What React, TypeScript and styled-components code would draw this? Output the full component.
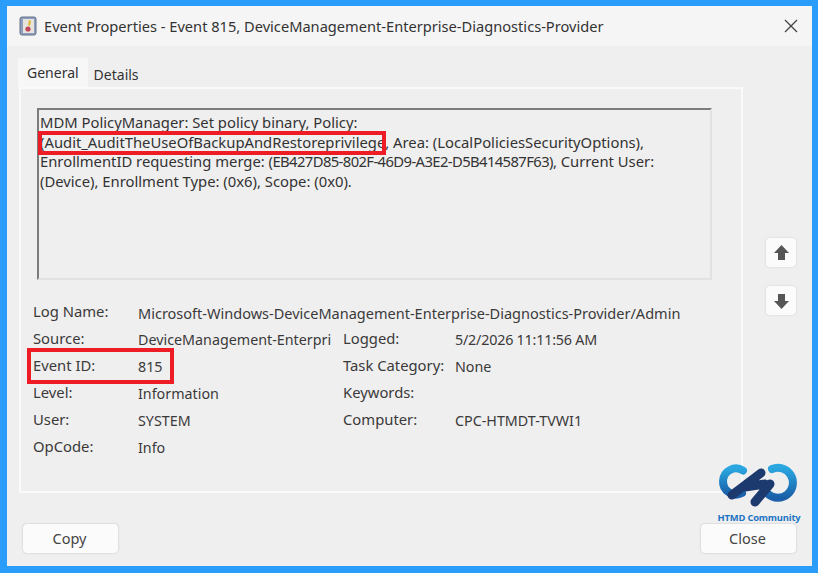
import React from 'react';
import styled, { createGlobalStyle } from 'styled-components';

const GlobalStyle = createGlobalStyle`
  html, body {
    margin: 0;
    padding: 0;
    background: #2a9dfb;
  }
  body {
    font-family: "Noto Sans", "Open Sans", sans-serif;
  }
`;

const Page = styled.div`
  width: 818px;
  height: 573px;
  padding: 6px 6px 7px 7px;
  box-sizing: border-box;
  overflow: hidden;
`;

const Window = styled.div`
  position: relative;
  height: 100%;
  background: #f0efef;
  display: flex;
  flex-direction: column;
`;

const TitleBar = styled.div`
  height: 40px;
  flex: none;
  display: flex;
  align-items: center;
  padding: 0 12px;
  background: #f5f5f5;
  color: #333;
  font-size: 14.63px;
`;

const TitleIcon = styled.svg`
  width: 18px;
  height: 20px;
  margin-right: 7px;
  flex: none;
`;

const TitleText = styled.span`
  flex: 1;
  white-space: nowrap;
`;

const CloseX = styled.svg`
  width: 14px;
  height: 14px;
  margin-right: 2px;
  flex: none;
`;

const Tabs = styled.div`
  display: flex;
  align-items: flex-end;
  height: 41px;
  padding-left: 11px;
  flex: none;
`;

const Tab = styled.div<{ $active?: boolean }>`
  height: ${p => (p.$active ? '29px' : '26px')};
  padding: ${p => (p.$active ? '5px 9px 0' : '4px 5px 0 6px')};
  box-sizing: border-box;
  font-size: 14px;
  color: #333;
  background: ${p => (p.$active ? '#f7f7f7' : 'transparent')};
`;

const Body = styled.div`
  display: flex;
  align-items: flex-start;
  padding-left: 12px;
`;

const Panel = styled.div`
  width: 724px;
  height: 406px;
  box-sizing: border-box;
  border: 2px solid #fafafa;
  padding: 19px 0 0 16px;
  flex: none;
`;

const MessageBox = styled.div`
  width: 675px;
  height: 172px;
  box-sizing: border-box;
  border-style: solid;
  border-width: 2px;
  border-color: #7c7c7c #e2e2e2 #e2e2e2 #7c7c7c;
  padding: 3px 1px;
  font-size: 14.8px;
  line-height: 19.5px;
  color: #333;
  white-space: nowrap;
`;

const Guid = styled.span`
  letter-spacing: -0.6px;
`;

const Fields = styled.div`
  display: grid;
  grid-template-columns: 105px 205px 112px 1fr;
  grid-auto-rows: 27px;
  align-items: center;
  margin: 17px 0 0 -4px;
  color: #3a3a3a;
`;

const Label = styled.span`
  font-size: 14.8px;
  white-space: nowrap;
`;

const Value = styled.span<{ $wide?: boolean; $tight?: boolean }>`
  font-size: ${p => (p.$wide ? '14.53px' : '14.3px')};
  letter-spacing: ${p => (p.$tight ? '-0.2px' : '0')};
  padding-top: 4px;
  white-space: nowrap;
  ${p => (p.$wide ? 'grid-column: 2 / 5;' : '')}
`;

const Side = styled.div`
  display: flex;
  flex-direction: column;
  gap: 19px;
  margin: 151px 0 0 23px;
`;

const ArrowButton = styled.div`
  width: 30px;
  height: 29px;
  background: #fbfbfb;
  border-radius: 4px;
  box-shadow: 0 0 2px #c8c8c8;
  display: flex;
  align-items: center;
  justify-content: center;
`;

const Footer = styled.div`
  display: flex;
  justify-content: space-between;
  padding: 31px 16px 0;
`;

const Button = styled.div`
  width: 95px;
  height: 29px;
  box-sizing: border-box;
  padding: 0 2px 2px 0;
  background: #fcfbfb;
  border-radius: 4px;
  box-shadow: 0 0 2px #b8b8b8;
  display: flex;
  align-items: center;
  justify-content: center;
  font-size: 14.5px;
  color: #444;
`;

const Highlight = styled.div<{ $x: number; $y: number; $w: number; $h: number }>`
  position: absolute;
  left: ${p => p.$x}px;
  top: ${p => p.$y}px;
  width: ${p => p.$w}px;
  height: ${p => p.$h}px;
  box-sizing: border-box;
  border: 4px solid #ee1c25;
`;

const Logo = styled.div`
  position: absolute;
  left: 705px;
  top: 450px;
  width: 94px;
  display: flex;
  flex-direction: column;
  align-items: center;
`;

const LogoText = styled.span`
  font-family: "Open Sans", sans-serif;
  font-size: 9.4px;
  font-weight: 700;
  line-height: 12px;
  letter-spacing: -0.2px;
  color: #1c74c4;
  white-space: nowrap;
`;

const Arrow = ({ down }: { down?: boolean }) => (
  <svg width="17" height="18" viewBox="0 0 17 18">
    <path
      d={down ? 'M5 2h7v7h4l-7.5 8L1 9h4z' : 'M5 16h7V9h4L8.5 1 1 9h4z'}
      fill="#555"
    />
  </svg>
);

const rows = [
  ['Source:', 'DeviceManagement-Enterpri', 'Logged:', '5/2/2026 11:11:56 AM'],
  ['Event ID:', '815', 'Task Category:', 'None'],
  ['Level:', 'Information', 'Keywords:', ''],
  ['User:', 'SYSTEM', 'Computer:', 'CPC-HTMDT-TVWI1'],
  ['OpCode:', 'Info', '', ''],
];

export default function App() {
  return (
    <Page>
      <GlobalStyle />
      <Window>
        <TitleBar>
          <TitleIcon viewBox="0 0 18 20">
            <rect x="1" y="1" width="16" height="18" rx="2" fill="#8d9fc0" stroke="#66708a" />
            <rect x="4" y="3" width="11" height="14" fill="#e8e4dc" />
            <path d="M10 4l2 1-1 5-2-1z" fill="#e3b62c" />
            <circle cx="9" cy="13" r="2.6" fill="#c0455a" />
          </TitleIcon>
          <TitleText>Event Properties - Event 815, DeviceManagement-Enterprise-Diagnostics-Provider</TitleText>
          <CloseX viewBox="0 0 14 14">
            <path d="M1 1l12 12M13 1L1 13" stroke="#444" strokeWidth="1.3" fill="none" />
          </CloseX>
        </TitleBar>
        <Tabs>
          <Tab $active>General</Tab>
          <Tab>Details</Tab>
        </Tabs>
        <Body>
          <Panel>
            <MessageBox>
              MDM PolicyManager: Set policy binary, Policy:
              <br />
              (Audit_AuditTheUseOfBackupAndRestoreprivilege, Area: (LocalPoliciesSecurityOptions),
              <br />
              EnrollmentID requesting merge: <Guid>(EB427D85-802F-46D9-A3E2-D5B414587F63)</Guid>, Current User:
              <br />
              (Device), Enrollment Type: (0x6), Scope: (0x0).
            </MessageBox>
            <Fields>
              <Label>Log Name:</Label>
              <Value $wide>Microsoft-Windows-DeviceManagement-Enterprise-Diagnostics-Provider/Admin</Value>
              {rows.map(([label, value, label2, value2]) => (
                <React.Fragment key={label}>
                  <Label>{label}</Label>
                  <Value>{value}</Value>
                  <Label>{label2}</Label>
                  <Value $tight={label2 === 'Logged:'}>{value2}</Value>
                </React.Fragment>
              ))}
            </Fields>
          </Panel>
          <Side>
            <ArrowButton>
              <Arrow />
            </ArrowButton>
            <ArrowButton>
              <Arrow down />
            </ArrowButton>
          </Side>
        </Body>
        <Footer>
          <Button>Copy</Button>
          <Button>Close</Button>
        </Footer>
        <Highlight $x={31} $y={125} $w={348} $h={24} />
        <Highlight $x={20} $y={342} $w={147} $h={36} />
        <Logo>
          <svg width="94" height="56" viewBox="0 0 94 56">
            <defs>
              <linearGradient id="logoBlue" x1="0" y1="0" x2="0" y2="1">
                <stop offset="0" stopColor="#2aa7e0" />
                <stop offset="1" stopColor="#1a5fa8" />
              </linearGradient>
            </defs>
            <path d="M31 14.500A13 13 0 1 0 30 37" fill="none" stroke="url(#logoBlue)" strokeWidth="8" strokeLinecap="round" />
            <path d="M60 13A15 15 0 1 1 56 38" fill="none" stroke="url(#logoBlue)" strokeWidth="8" strokeLinecap="round" />
            <path d="M20 39L49 17M43 46L58 28M33 31L53 28" fill="none" stroke="#1d3a6e" strokeWidth="9" strokeLinecap="round" />
          </svg>
          <LogoText>HTMD Community</LogoText>
        </Logo>
      </Window>
    </Page>
  );
}
